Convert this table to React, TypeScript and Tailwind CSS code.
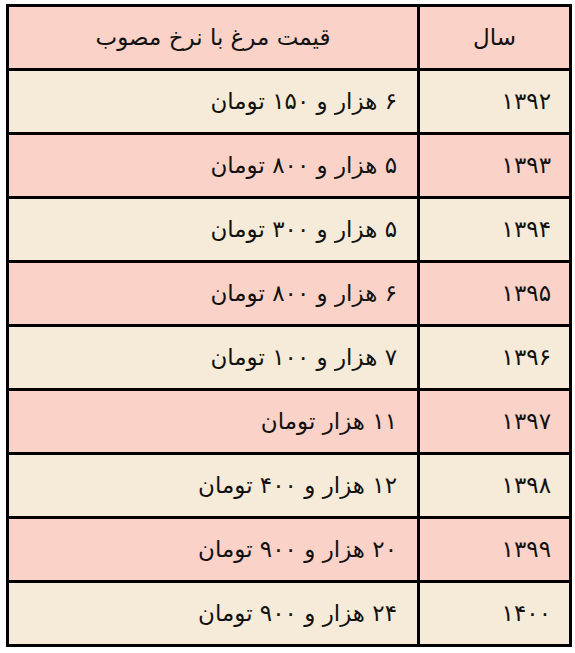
import React from "react";

const rows: [string, string][] = [
  ["۱۳۹۲", "۶ هزار و ۱۵۰ تومان"],
  ["۱۳۹۳", "۵ هزار و ۸۰۰ تومان"],
  ["۱۳۹۴", "۵ هزار و ۳۰۰ تومان"],
  ["۱۳۹۵", "۶ هزار و ۸۰۰ تومان"],
  ["۱۳۹۶", "۷ هزار و ۱۰۰ تومان"],
  ["۱۳۹۷", "۱۱ هزار تومان"],
  ["۱۳۹۸", "۱۲ هزار و ۴۰۰ تومان"],
  ["۱۳۹۹", "۲۰ هزار و ۹۰۰ تومان"],
  ["۱۴۰۰", "۲۴ هزار و ۹۰۰ تومان"],
];

export default function App() {
  return (
    <div className="w-[575px] h-[653px] bg-white pt-[4px] pl-[6px]" style={{ fontFamily: '"DejaVu Sans", "Noto Sans", sans-serif' }}>
      <table dir="rtl" className="border-collapse w-[566px] text-[#111] text-[23px]">
        <thead>
          <tr className="h-[64px] bg-[#fbd2c8]">
            <th className="w-[152px] border-[3px] border-black font-normal text-center">سال</th>
            <th className="border-[3px] border-black font-normal text-center">قیمت مرغ با نرخ مصوب</th>
          </tr>
        </thead>
        <tbody>
          {rows.map(([y, p], i) => (
            <tr key={y} className={i % 2 === 0 ? "h-[64px] bg-[#f5ebd8]" : "h-[64px] bg-[#fbd2c8]"}>
              <td className="border-[3px] border-black text-right pr-[18px]">{y}</td>
              <td className="border-[3px] border-black text-right pr-[20px]">{p}</td>
            </tr>
          ))}
        </tbody>
      </table>
    </div>
  );
}
